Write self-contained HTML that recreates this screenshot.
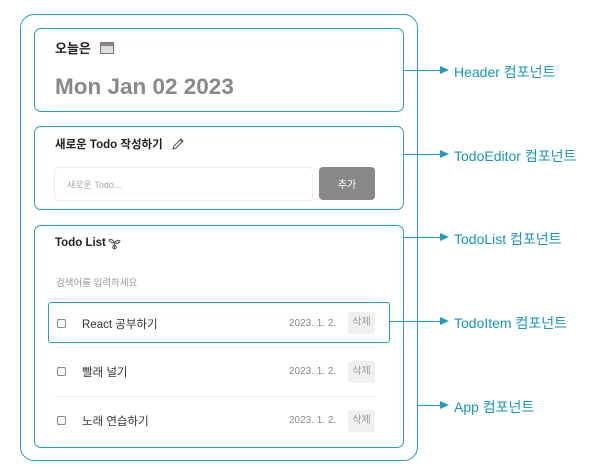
<!DOCTYPE html>
<html><head><meta charset="utf-8"><style>
*{box-sizing:border-box;margin:0;padding:0}
body{width:606px;height:471px;background:#fff;position:relative;font-family:"Liberation Sans","Noto Sans CJK KR",sans-serif;overflow:hidden}
.b{position:absolute;border:1.3px solid #22a0c2}
.t{position:absolute;white-space:nowrap}
.lab{position:absolute;color:#1596bb;font-size:14px;white-space:nowrap}
.ln{position:absolute;height:1.3px;background:#1e9cc0}
.ar{position:absolute;width:0;height:0;border-top:4px solid transparent;border-bottom:4px solid transparent;border-left:9px solid #1e9cc0}
.cb{position:absolute;width:9px;height:9px;border:1px solid #888;border-radius:2px}
.del{position:absolute;width:27px;height:22px;background:#f0f0f0;border-radius:3px;color:#999;font-size:10px;text-align:center;line-height:16px;padding-top:3px}
.dt{position:absolute;color:#888;font-size:10px}
.it{position:absolute;color:#333;font-size:11.5px}
.sep{position:absolute;left:55px;width:320px;height:1px;background:#eee}
</style></head><body>
<div class="b" style="left:20px;top:14px;width:398px;height:447px;border-radius:14px"></div>
<div class="b" style="left:34px;top:28px;width:370px;height:84px;border-radius:7px"></div>
<div class="t" style="left:55px;top:38px;font-size:13px;font-weight:bold;color:#222">오늘은</div>
<div style="position:absolute;left:100px;top:42px;width:14px;height:12px;border:1px solid #777;background:#ddd"><div style="height:3px;background:#888"></div></div>
<div class="t" style="left:55px;top:74px;font-size:22.5px;font-weight:bold;color:#888">Mon Jan 02 2023</div>

<div class="b" style="left:34px;top:126px;width:370px;height:84px;border-radius:7px"></div>
<div class="t" style="left:55px;top:136px;font-size:11.5px;font-weight:bold;color:#222">새로운 Todo 작성하기</div>
<svg style="position:absolute;left:171px;top:137px" width="14" height="14" viewBox="0 0 14 14"><path d="M2 12 L3 9 L10 2 L12 4 L5 11 Z M9 3 L11 5" fill="none" stroke="#555" stroke-width="1.1"/></svg>
<div style="position:absolute;left:54px;top:167px;width:259px;height:34px;border:1px solid #eee;border-radius:4px"></div>
<div class="t" style="left:67px;top:178px;font-size:9px;color:#aaa">새로운 Todo...</div>
<div style="position:absolute;left:319px;top:167px;width:56px;height:33px;background:#888;border-radius:4px;color:#fff;font-size:10px;display:flex;align-items:center;justify-content:center">추가</div>

<div class="b" style="left:34px;top:225px;width:370px;height:223px;border-radius:7px"></div>
<div class="t" style="left:55px;top:237px;font-size:11.5px;font-weight:bold;color:#222">Todo List</div>
<svg style="position:absolute;left:108px;top:237px" width="13" height="13" viewBox="0 0 13 13"><path d="M6.5 12 V6 M6.5 6 C5 2 2 2 1 3 C2 5 4 6 6.5 6 M6.5 6 C8 3 11 3 12 4 C11 6 9 6.5 6.5 6" fill="none" stroke="#555" stroke-width="1.1"/><circle cx="6.5" cy="10" r="1.8" fill="none" stroke="#555" stroke-width="1"/></svg>
<div class="t" style="left:56px;top:275px;font-size:9.5px;color:#999">검색어를 입력하세요</div>
<div class="sep" style="top:298px"></div>
<div class="b" style="left:48px;top:302px;width:342px;height:41px;border-radius:3px"></div>
<div class="cb" style="left:57px;top:319px"></div><div class="it" style="left:82px;top:316px">React 공부하기</div><div class="dt" style="left:289px;top:318px">2023. 1. 2.</div><div class="del" style="left:348px;top:312px">삭제</div>
<div class="sep" style="top:347px"></div>
<div class="sep" style="top:396px"></div>
<div class="cb" style="left:57px;top:367px"></div><div class="it" style="left:82px;top:364px">빨래 널기</div><div class="dt" style="left:289px;top:366px">2023. 1. 2.</div><div class="del" style="left:348px;top:361px">삭제</div>
<div class="cb" style="left:57px;top:416px"></div><div class="it" style="left:82px;top:413px">노래 연습하기</div><div class="dt" style="left:289px;top:415px">2023. 1. 2.</div><div class="del" style="left:348px;top:410px">삭제</div>

<div class="ln" style="left:404px;top:70px;width:36px"></div><div class="ar" style="left:440px;top:66px"></div><div class="lab" style="left:454px;top:62px">Header 컴포넌트</div>
<div class="ln" style="left:404px;top:154px;width:36px"></div><div class="ar" style="left:440px;top:150px"></div><div class="lab" style="left:454px;top:146px">TodoEditor 컴포넌트</div>
<div class="ln" style="left:404px;top:237px;width:36px"></div><div class="ar" style="left:440px;top:233px"></div><div class="lab" style="left:454px;top:229px">TodoList 컴포넌트</div>
<div class="ln" style="left:390px;top:321px;width:50px"></div><div class="ar" style="left:440px;top:317px"></div><div class="lab" style="left:454px;top:313px">TodoItem 컴포넌트</div>
<div class="ln" style="left:418px;top:405px;width:22px"></div><div class="ar" style="left:440px;top:401px"></div><div class="lab" style="left:454px;top:397px">App 컴포넌트</div>
</body></html>
